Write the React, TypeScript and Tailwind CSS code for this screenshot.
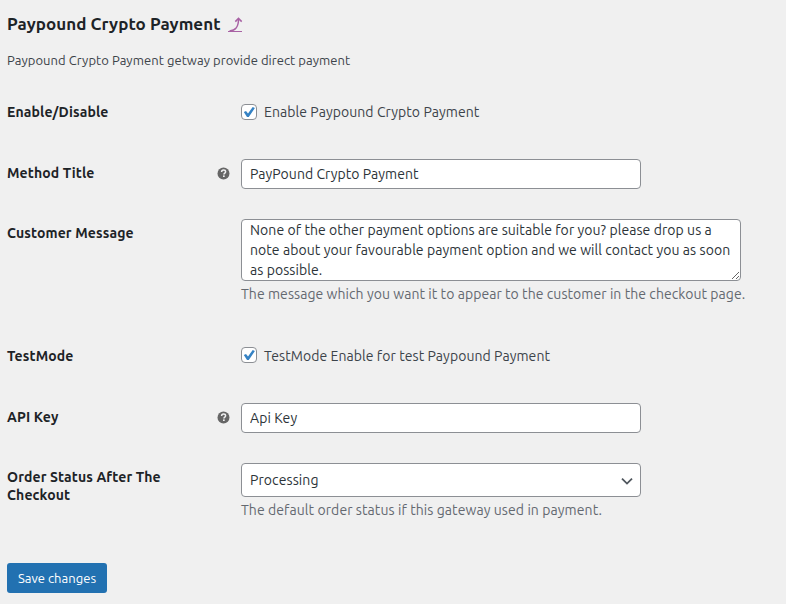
import type { ReactNode } from "react";

function HelpTip() {
  return (
    <svg className="mt-[3px] h-[13px] w-[13px] shrink-0" viewBox="0 0 13 13" aria-label="Help">
      <circle cx="6.5" cy="6.5" r="6" fill="#666" />
      <path d="M4.6 5.1C4.6 3.8 5.4 3.1 6.6 3.1s2 .7 2 1.7c0 1.4-1.7 1.4-1.7 2.8" fill="none" stroke="#f0f0f1" strokeWidth="1.5" />
      <rect x="6" y="8.4" width="1.7" height="1.6" fill="#f0f0f1" />
    </svg>
  );
}

function Row({ label, help, className, children }: { label: string; help?: boolean; className: string; children: ReactNode }) {
  return (
    <div className={`flex ${className}`}>
      <div className="flex w-[234px] shrink-0 justify-between pt-5 pr-[11px]">
        <div className="w-[180px] text-[14px] leading-[18px] font-bold tracking-[0.13px] text-[#1d2327]">{label}</div>
        {help && <HelpTip />}
      </div>
      <div className="pt-[15px]">{children}</div>
    </div>
  );
}

function Check({ label, className, textClass }: { label: string; className: string; textClass: string }) {
  return (
    <label className={`flex h-4 items-center gap-[7px] whitespace-nowrap ${className}`}>
      <span className="flex h-4 w-4 items-center justify-center rounded-[4px] border border-[#8c8f94] bg-white">
        <svg className="h-[14px] w-[14px] shrink-0" viewBox="0 0 14 14">
          <path d="M1.8 7.1 4 6 6 8.6 10.7 1.9 12.9 2.9 6.8 12 5 12Z" fill="#3582c4" />
        </svg>
      </span>
      <span className={`text-[14px] leading-5 tracking-[0.07px] text-[#3c434a] ${textClass}`}>{label}</span>
    </label>
  );
}

export default function App() {
  return (
    <main className="h-[604px] w-[786px] overflow-hidden bg-[#f0f0f0] pl-[7px] font-['Ubuntu','Noto_Sans',sans-serif] text-[#3c434a]">
      <header className="flex h-12 items-center gap-[7px]">
        <h2 className="text-[17px] font-bold tracking-[0.06px] text-[#1d2327]">Paypound Crypto Payment</h2>
        <svg className="mt-[2px] h-[16px] w-[15px]" viewBox="0 0 15 16" fill="none" stroke="#a862a4">
          <path d="M0 14.5H14" strokeWidth="1" />
          <path d="M1.5 14C7.5 13.6 10.5 10.5 10.5 2" strokeWidth="1.5" />
          <path d="M7.3 4.6 10.5 1.4 13.7 4.6" strokeWidth="1.5" />
        </svg>
      </header>
      <p className="h-[35px] pt-[2px] text-[13px] leading-5 tracking-[0.06px] whitespace-nowrap">Paypound Crypto Payment getway provide direct payment</p>
      <form>
        <Row label="Enable/Disable" className="h-[61px]">
          <Check label="Enable Paypound Crypto Payment" className="mt-[6px]" textClass="" />
        </Row>
        <Row label="Method Title" help className="h-[60px]">
          <input defaultValue="PayPound Crypto Payment" className="block h-[30px] w-[400px] rounded-[4px] border border-[#8c8f94] bg-white px-2 text-[14px] tracking-[0.05px] text-[#2c3338]" />
        </Row>
        <Row label="Customer Message" className="h-[123px]">
          <textarea
            defaultValue={"None of the other payment options are suitable for you? please drop us a\nnote about your favourable payment option and we will contact you as soon\nas possible."}
            className="block h-[62px] w-[500px] resize overflow-hidden rounded-[4px] border border-[#8c8f94] bg-white px-2 text-[14px] leading-5 tracking-[0.07px] whitespace-pre text-[#2c3338]"
          />
          <p className="mt-[3px] text-[14px] leading-5 tracking-[0.06px] whitespace-nowrap text-[#646970]">The message which you want it to appear to the customer in the checkout page.</p>
        </Row>
        <Row label="TestMode" className="h-[61px]">
          <Check label="TestMode Enable for test Paypound Payment" className="mt-[5px]" textClass="mt-[2px]" />
        </Row>
        <Row label="API Key" help className="h-[60px]">
          <input defaultValue="Api Key" className="block h-[30px] w-[400px] rounded-[4px] border border-[#8c8f94] bg-white px-2 text-[14px] tracking-[0.07px] text-[#2c3338]" />
        </Row>
        <Row label="Order Status After The Checkout" className="h-[115px]">
          <div className="flex h-[34px] w-[400px] items-center justify-between rounded-[4px] border border-[#8c8f94] bg-white pr-[7px] pl-2">
            <span className="text-[14px] tracking-[0.09px] text-[#2c3338]">Processing</span>
            <svg className="mt-px h-3 w-3" viewBox="0 0 12 12" fill="none" stroke="#50575e" strokeWidth="1.8">
              <path d="M1 3.6 6 8.6 11 3.6" />
            </svg>
          </div>
          <p className="mt-[3px] text-[14px] leading-5 tracking-[0.08px] whitespace-nowrap text-[#646970]">The default order status if this gateway used in payment.</p>
        </Row>
        <button type="button" className="block h-[30px] w-[100px] rounded-[3px] bg-[#2271b1] pt-px text-[13px] tracking-[0.03px] whitespace-nowrap text-white">Save changes</button>
      </form>
    </main>
  );
}
